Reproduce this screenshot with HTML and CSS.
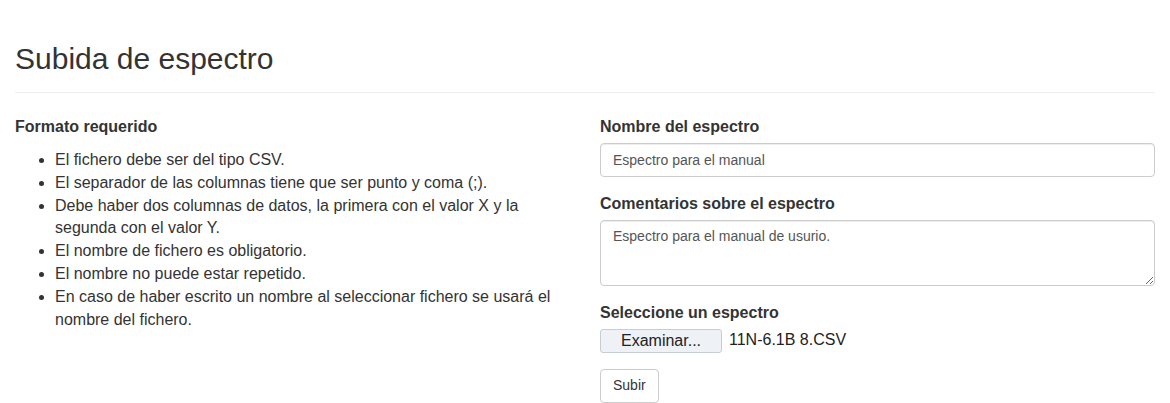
FILE: index.html
```html
<!DOCTYPE html>
<html lang="es">
<head>
<meta charset="utf-8">
<title>Subida de espectro</title>
<link rel="stylesheet" href="styles.css">
</head>
<body>
<div class="container">
  <div class="page-header">
    <h1>Subida de espectro</h1>
  </div>
  <div class="row">
    <div class="col">
      <p class="section-title">Formato requerido</p>
      <ul class="rules">
        <li>El fichero debe ser del tipo CSV.</li>
        <li>El separador de las columnas tiene que ser punto y coma (;).</li>
        <li>Debe haber dos columnas de datos, la primera con el valor X y la segunda con el valor Y.</li>
        <li>El nombre de fichero es obligatorio.</li>
        <li>El nombre no puede estar repetido.</li>
        <li>En caso de haber escrito un nombre al seleccionar fichero se usará el nombre del fichero.</li>
      </ul>
    </div>
    <div class="col">
      <form class="upload-form">
        <div class="form-group">
          <label class="form-label" for="nombre">Nombre del espectro</label>
          <input class="form-control" id="nombre" type="text" value="Espectro para el manual">
        </div>
        <div class="form-group">
          <label class="form-label" for="comentarios">Comentarios sobre el espectro</label>
          <textarea class="form-control form-textarea" id="comentarios">Espectro para el manual de usurio.</textarea>
        </div>
        <div class="form-group">
          <span class="form-label">Seleccione un espectro</span>
          <div class="file-input">
            <span class="file-btn">Examinar...</span>
            <span class="file-name">11N-6.1B 8.CSV</span>
          </div>
        </div>
        <button type="button" class="btn">Subir</button>
      </form>
    </div>
  </div>
</div>
</body>
</html>
```

FILE: styles.css
```css
* {
  box-sizing: border-box;
}

html, body {
  margin: 0;
  padding: 0;
  background: #fff;
}

body {
  font-family: "Liberation Sans", Arial, Helvetica, sans-serif;
  font-size: 16px;
  line-height: 1.42857;
  color: #333;
}

.container {
  padding: 0 15px;
}

.page-header {
  padding-top: 42px;
  padding-bottom: 8px;
  border-bottom: 1px solid #eee;
  margin: 0 0 23px;
}

.page-header h1 {
  margin: 0 0 9px;
  font-size: 30px;
  font-weight: 400;
  line-height: 1.1;
  color: #333;
}

.row {
  display: grid;
  grid-template-columns: 1fr 1fr;
  column-gap: 30px;
}

.section-title {
  margin: 0 0 10px;
  font-weight: 700;
}

.rules {
  margin: 0 0 10px;
  padding-left: 40px;
}

.form-group {
  margin-bottom: 16px;
}

.form-label {
  display: block;
  font-weight: 700;
  margin-bottom: 4px;
}

.form-control {
  display: block;
  width: 100%;
  height: 34px;
  padding: 6px 12px;
  font-family: inherit;
  font-size: 14px;
  line-height: 1.42857;
  color: #555;
  background: #fff;
  border: 1px solid #ccc;
  border-radius: 4px;
  box-shadow: inset 0 1px 1px rgba(0, 0, 0, .075);
}

.form-textarea {
  height: 66px;
  resize: vertical;
}

.file-input {
  display: flex;
  align-items: center;
  gap: 7px;
  height: 24px;
}

.file-btn {
  display: inline-block;
  width: 122px;
  height: 24px;
  line-height: 22px;
  text-align: center;
  font-size: 16px;
  color: #222;
  background: #eef1f5;
  border: 1px solid #c8ccd3;
  border-radius: 3px;
}

.file-name {
  font-size: 16px;
  color: #222;
}

.btn {
  display: inline-block;
  padding: 6px 12px;
  font-family: inherit;
  font-size: 14px;
  line-height: 1.42857;
  color: #333;
  background: #fff;
  border: 1px solid #ccc;
  border-radius: 4px;
  cursor: pointer;
}
```
